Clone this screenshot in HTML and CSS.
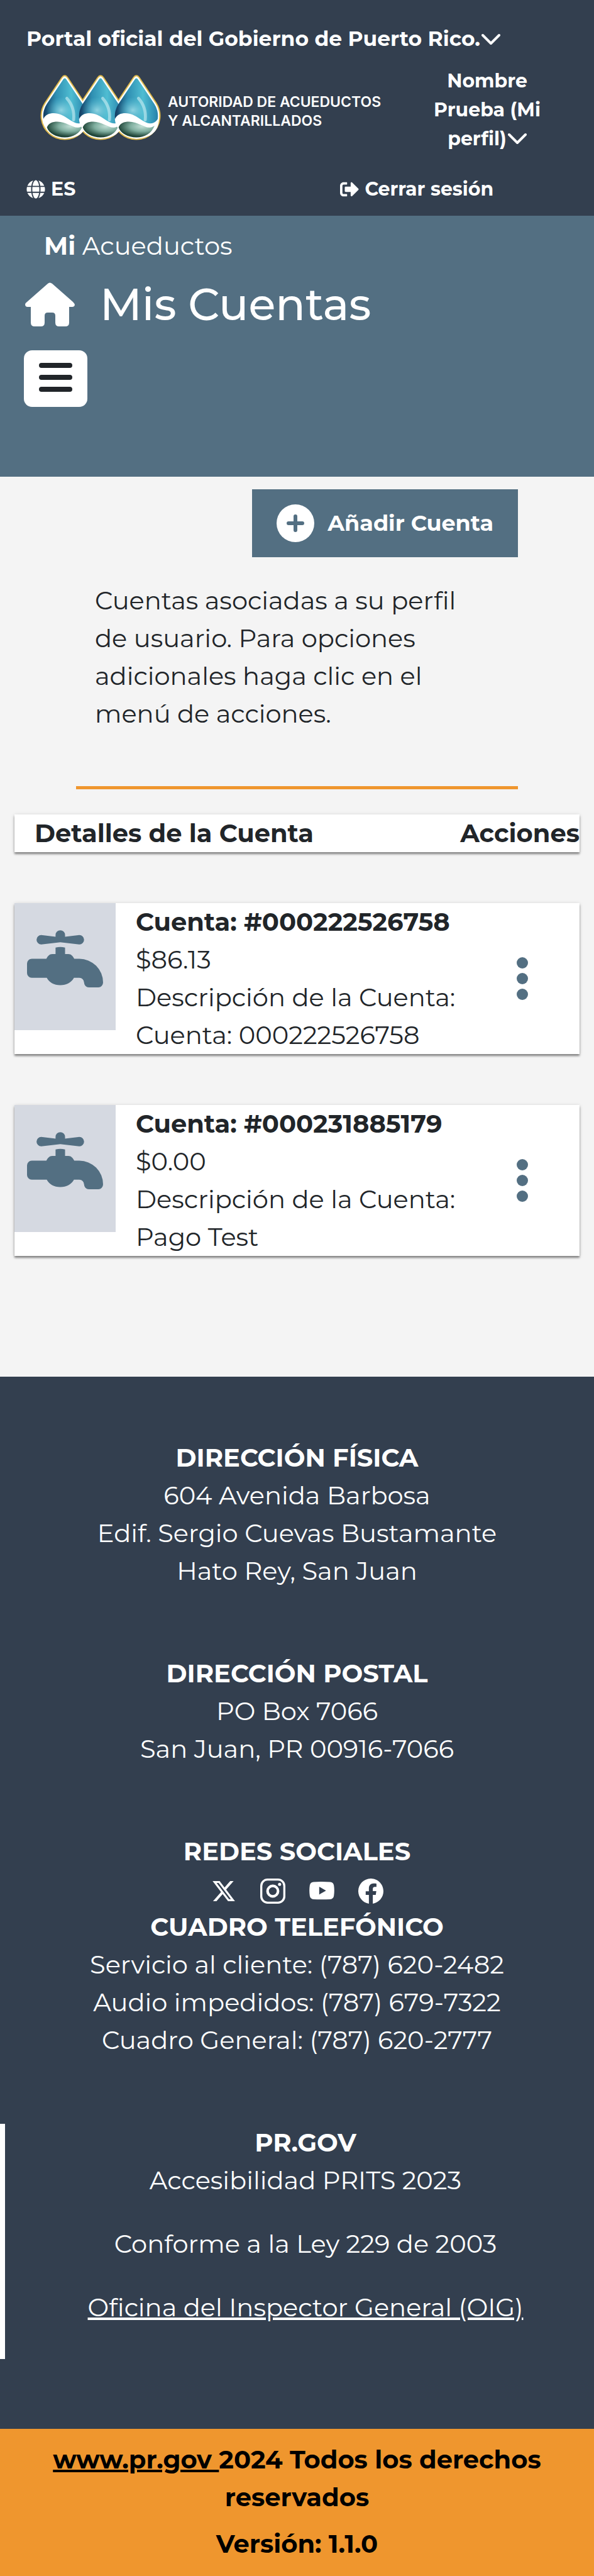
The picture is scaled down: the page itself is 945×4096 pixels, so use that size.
FILE: index.html
```html
<!DOCTYPE html>
<html lang="es">
<head>
<meta charset="utf-8">
<meta name="viewport" content="width=device-width, initial-scale=1">
<title>Mis Cuentas - Mi Acueductos</title>
<link rel="stylesheet" href="styles.css">
</head>
<body>
<svg class="defs" aria-hidden="true">
  <defs>
    <symbol id="chevron" viewBox="0 0 30 20"><path d="M2 3l13 13L28 3" fill="none" stroke="currentColor" stroke-width="4" stroke-linecap="round" stroke-linejoin="round"/></symbol>
    <symbol id="faucet" viewBox="0 64 512 384">
      <path d="M96 96L192 108V96a32 32 0 0 1 64 0v12L352 96a32 32 0 0 1 0 64L224 145 96 160a32 32 0 0 1 0-64Z"/>
      <path d="M192 181q32-8 64 0v43h22c20 0 30 14 40 32h34a160 160 0 0 1 160 160a32 32 0 0 1-32 32h-64a32 32 0 0 1-32-32a32 32 0 0 0-32-32h-36c-18 32-50 50-92 50s-74-18-91-50H32a32 32 0 0 1-32-32v-64a32 32 0 0 1 32-32h98c10-18 20-32 40-32h22Z"/>
    </symbol>
    <symbol id="dots" viewBox="0 0 20 70"><circle cx="10" cy="10" r="9"/><circle cx="10" cy="35" r="9"/><circle cx="10" cy="60" r="9"/></symbol>
    <linearGradient id="blue" x1="0" y1="0" x2="1" y2="0">
      <stop offset="0" stop-color="#123a60"/><stop offset=".3" stop-color="#2f8fb2"/><stop offset=".65" stop-color="#4fbdd2"/><stop offset="1" stop-color="#2782ab"/>
    </linearGradient>
    <radialGradient id="glow"><stop offset="0" stop-color="#a5e0ea" stop-opacity=".8"/><stop offset="1" stop-color="#5cc3d6" stop-opacity="0"/></radialGradient>
    <radialGradient id="green" cx=".65" cy=".3" r=".65">
      <stop offset="0" stop-color="#c2dfd6"/><stop offset=".5" stop-color="#7fae9f"/><stop offset="1" stop-color="#1f4538"/>
    </radialGradient>
    <path id="shell" d="M-13 82Q0 64 13 82L109 226A130 130 0 1 1-109 226Z"/>
    <path id="inner" d="M-7 88Q0 80 7 88L101 229A122 122 0 1 1-101 229Z"/>
    <clipPath id="innerClip"><use href="#inner"/></clipPath>
    <g id="drop">
      <use href="#inner" fill="url(#blue)"/>
      <g clip-path="url(#innerClip)">
        <ellipse cx="-20" cy="265" rx="85" ry="75" fill="url(#glow)"/>
        <path d="M12 198Q58 250 50 320" fill="none" stroke="#c3eaf0" stroke-width="17" stroke-linecap="round" opacity=".65"/>
      </g>
      <path d="M-122 316C-110 290-88 282-62 282C0 282 34 338 78 340C105 341 118 320 127 308C132 400 60 425 0 426C-70 422-118 370-122 316Z" fill="#fff"/>
      <path d="M-101 362C-92 338-70 330-42 330C10 330 45 366 76 363C88 362 94 358 103 352C86 396 48 419 0 419C-48 419-90 396-101 362Z" fill="url(#green)"/>
    </g>
  </defs>
</svg>

<header class="topbar">
  <button class="plain portal" type="button">Portal oficial del Gobierno de Puerto Rico.<svg class="chevron"><use href="#chevron"/></svg></button>
  <div class="brand-row">
    <a class="brand" href="#">
      <svg class="drops" viewBox="48 65 684 370" aria-hidden="true">
        <g stroke="#dfb94a" stroke-width="14" fill="#fff"><use href="#shell" x="187"/><use href="#shell" x="390"/><use href="#shell" x="593"/></g>
        <g fill="#fff"><use href="#shell" x="187"/><use href="#shell" x="390"/><use href="#shell" x="593"/></g>
        <use href="#drop" x="187"/><use href="#drop" x="390"/><use href="#drop" x="593"/>
      </svg>
      <span>AUTORIDAD DE ACUEDUCTOS<br>Y ALCANTARILLADOS</span>
    </a>
    <button class="plain user" type="button">Nombre<br>Prueba (Mi<br>perfil)<svg class="chevron"><use href="#chevron"/></svg></button>
  </div>
  <div class="tools">
    <a class="tool" href="#"><svg class="tool-icon" viewBox="0 0 496 512"><path d="M336.500 160C322 70.700 287.800 8 248 8s-74 62.700-88.500 152h177zM152 256c0 22.200 1.200 43.500 3.300 64h185.300c2.100-20.500 3.300-41.800 3.300-64s-1.200-43.500-3.300-64H155.300c-2.100 20.500-3.300 41.800-3.300 64zm324.700-96c-28.600-67.900-86.500-120.400-158-141.600 24.400 33.800 41.200 84.700 50 141.600h108zM177.200 18.400C105.800 39.600 47.800 92.100 19.300 160h108c8.700-56.900 25.500-107.800 49.900-141.600zM487.400 192H372.700c2.100 21 3.300 42.500 3.300 64s-1.200 43-3.300 64h114.600c5.500-20.500 8.600-41.800 8.600-64s-3.100-43.500-8.500-64zM120 256c0-21.500 1.200-43 3.300-64H8.600C3.200 212.500 0 233.800 0 256s3.200 43.500 8.600 64h114.600c-2-21-3.200-42.500-3.200-64zm39.500 96c14.500 89.300 48.700 152 88.500 152s74-62.700 88.500-152h-177zm159.300 141.600c71.400-21.200 129.400-73.700 158-141.600h-108c-8.800 56.900-25.600 107.800-50 141.600zM19.300 352c28.600 67.900 86.500 120.400 158 141.600-24.400-33.800-41.200-84.700-50-141.600h-108z"/></svg>ES</a>
    <a class="tool" href="#"><svg class="tool-icon" viewBox="0 0 512 512"><path d="M497 273L329 441c-15 15-41 4.500-41-17v-96H152c-13.300 0-24-10.700-24-24v-96c0-13.300 10.700-24 24-24h136V88c0-21.400 25.900-32 41-17l168 168c9.300 9.400 9.300 24.600 0 34zM192 436v-40c0-6.600-5.400-12-12-12H96c-17.700 0-32-14.300-32-32V160c0-17.700 14.300-32 32-32h84c6.600 0 12-5.400 12-12V76c0-6.600-5.400-12-12-12H96c-53 0-96 43-96 96v192c0 53 43 96 96 96h84c6.600 0 12-5.400 12-12z"/></svg>Cerrar sesión</a>
  </div>
</header>

<section class="hero">
  <p class="app-name"><b>Mi</b> Acueductos</p>
  <div class="title-row">
    <a href="#" aria-label="Inicio"><svg class="home" viewBox="0 0 79 70"><path d="M36 2Q39 -1 43 2L76 31Q79 34 79 36Q78 39 75 39H70V64Q70 70 64 70H54Q48 70 48 64V53Q48 48 43 48H36Q31 48 31 53V64Q31 70 25 70H15Q9 70 9 64V39H4Q0 39 0 35Q0 33 3 31Z"/></svg></a>
    <h1>Mis Cuentas</h1>
  </div>
  <button class="menu" type="button" aria-label="Menú"><span></span><span></span><span></span></button>
</section>

<main>
  <div class="intro">
    <button class="add" type="button"><svg class="plus" viewBox="0 0 60 60"><circle cx="30" cy="30" r="30" fill="#fff"/><path d="M30 19v22M19 30h22" stroke="#536f82" stroke-width="6" stroke-linecap="round"/></svg>Añadir Cuenta</button>
    <p>Cuentas asociadas a su perfil<br>de usuario. Para opciones<br>adicionales haga clic en el<br>menú de acciones.</p>
  </div>
  <div class="accounts">
    <div class="panel heading"><span>Detalles de la Cuenta</span><span>Acciones</span></div>
    <article class="panel account">
      <div class="thumb"><svg><use href="#faucet"/></svg></div>
      <div class="details"><h2>Cuenta: #000222526758</h2><p>$86.13</p><p>Descripción de la Cuenta:</p><p>Cuenta: 000222526758</p></div>
      <button class="plain actions" type="button" aria-label="Acciones"><svg><use href="#dots"/></svg></button>
    </article>
    <article class="panel account">
      <div class="thumb"><svg><use href="#faucet"/></svg></div>
      <div class="details"><h2>Cuenta: #000231885179</h2><p>$0.00</p><p>Descripción de la Cuenta:</p><p>Pago Test</p></div>
      <button class="plain actions" type="button" aria-label="Acciones"><svg><use href="#dots"/></svg></button>
    </article>
  </div>
</main>

<footer>
  <div class="info">
    <section><h2>DIRECCIÓN FÍSICA</h2><p>604 Avenida Barbosa</p><p>Edif. Sergio Cuevas Bustamante</p><p>Hato Rey, San Juan</p></section>
    <section><h2>DIRECCIÓN POSTAL</h2><p>PO Box 7066</p><p>San Juan, PR 00916-7066</p></section>
    <section>
      <h2>REDES SOCIALES</h2>
      <div class="social">
        <a href="#" aria-label="X"><svg viewBox="-1 -1 18 18"><path d="M12.600.750h2.454l-5.360 6.142L16 15.250h-4.937l-3.867-5.070-4.425 5.070H.316l5.733-6.570L0 .750h5.063l3.495 4.633L12.601.750Zm-.860 13.028h1.360L4.323 2.145H2.865z"/></svg></a>
        <a href="#" aria-label="Instagram"><svg viewBox="0 0 48 48"><g fill="none" stroke="currentColor"><rect x="2" y="2" width="44" height="44" rx="12" stroke-width="4"/><circle cx="24" cy="24" r="10" stroke-width="5"/></g><circle cx="37" cy="11" r="3"/></svg></a>
        <a href="#" aria-label="YouTube"><svg viewBox="0 0 48 48"><path fill-rule="evenodd" d="M8 6.500Q24 5.500 40 6.500Q46 7 47 13Q48.500 23 47 33Q46 39 40 39.500Q24 40.500 8 39.500Q2 39 1 33Q-.500 23 1 13Q2 7 8 6.500ZM19 15.500V30.500L32 23Z"/></svg></a>
        <a href="#" aria-label="Facebook"><svg viewBox="0 0 16 16"><path d="M16 8.049c0-4.446-3.582-8.050-8-8.050C3.580 0-.002 3.603-.002 8.050c0 4.017 2.926 7.347 6.750 7.951v-5.625h-2.030V8.050H6.750V6.275c0-2.017 1.195-3.131 3.022-3.131.876 0 1.791.157 1.791.157v1.980h-1.009c-.993 0-1.303.621-1.303 1.258v1.510h2.218l-.354 2.326H9.250V16c3.824-.604 6.750-3.934 6.750-7.951"/></svg></a>
      </div>
      <h2>CUADRO TELEFÓNICO</h2><p>Servicio al cliente: (787) 620-2482</p><p>Audio impedidos: (787) 679-7322</p><p>Cuadro General: (787) 620-2777</p>
    </section>
    <section class="gov"><h2>PR.GOV</h2><p>Accesibilidad PRITS 2023</p><p>Conforme a la Ley 229 de 2003</p><p><a href="#">Oficina del Inspector General (OIG)</a></p></section>
  </div>
  <div class="legal">
    <p><a href="#">www.pr.gov </a>2024 Todos los derechos<br>reservados</p>
    <p>Versión: 1.1.0</p>
  </div>
</footer>
</body>
</html>
```

FILE: styles.css
```css
* { box-sizing: border-box; }
body { margin: 0; background: #f4f4f4; color: #212529; font-family: Montserrat, Inter, sans-serif; font-size: 40px; line-height: 60px; }
h1, h2, p { margin: 0; }
h2 { font-size: 40px; font-weight: 700; }
a { color: inherit; }
svg { fill: currentColor; display: block; }
.defs { position: absolute; width: 0; height: 0; }
.plain { padding: 0; border: 0; background: none; color: inherit; font: inherit; }

.topbar { background: #333f4f; color: #fff; padding: 37px 42px 18px; font-size: 30px; font-weight: 700; line-height: 48px; }
.topbar a { text-decoration: none; }
.chevron { display: inline-block; width: 30px; height: 20px; margin-left: 2px; }
.portal { display: block; text-align: left; font-size: 33px; }
.brand-row { display: flex; justify-content: space-between; align-items: flex-start; padding: 21px 33px 33px 22px; }
.brand { display: flex; align-items: flex-start; gap: 11px; padding-top: 13px; font-family: Inter, sans-serif; font-size: 23px; font-weight: 600; line-height: 30px; }
.drops { width: 192px; height: 104px; }
.brand span { padding-top: 28px; }
.user { width: 190px; line-height: 46px; text-align: center; }
.tools { display: grid; grid-template-columns: 58% 42%; }
.tool { display: flex; align-items: center; gap: 9px; }
.tool-icon { width: 30px; height: 30px; }

.hero { background: #536f82; color: #fff; padding: 18px 38px 111px; }
.app-name { padding-left: 32px; }
.title-row { display: flex; align-items: center; gap: 40px; padding: 13px 2px 23px; }
.home { width: 79px; height: 70px; }
h1 { font-size: 70px; font-weight: 500; line-height: 100px; }
.menu { width: 101px; height: 90px; border: 0; border-radius: 13px; background: #fff; display: flex; flex-direction: column; align-items: center; justify-content: center; gap: 11px; padding: 0 0 4px; }
.menu span { width: 53px; height: 8px; border-radius: 4px; background: #212529; }

.intro { margin: 20px 121px 40px; padding-bottom: 85px; border-bottom: 5px solid #ef962e; display: flex; flex-direction: column; }
.add { align-self: flex-end; display: flex; align-items: center; gap: 21px; height: 108px; padding: 0 39px; border: 0; background: #536f82; color: #fff; font: inherit; font-size: 35px; font-weight: 700; }
.plus { width: 60px; height: 60px; }
.intro p { padding: 39px 30px 0; }

.accounts { padding: 0 23px 192px; display: flex; flex-direction: column; gap: 81px; }
.panel { background: #fff; box-shadow: 0 3px 3px rgba(0, 0, 0, .4), 0 1px 6px rgba(0, 0, 0, .15); }
.heading { display: flex; justify-content: space-between; padding-left: 32px; font-weight: 700; }
.account { display: flex; align-items: stretch; }
.thumb { width: 161px; height: 202px; padding: 43px 20px; background: #d5d9e1; color: #536f82; }
.thumb svg { width: 121px; height: 91px; }
.details { flex: 1; padding-left: 32px; }
.actions { width: 182px; display: flex; align-items: center; justify-content: center; color: #536f82; }
.actions svg { width: 20px; height: 70px; }

footer { text-align: center; }
.info { background: #333f4f; color: #fff; padding: 99px 0 111px; display: flex; flex-direction: column; gap: 103px; }
.social { display: flex; justify-content: center; align-items: center; gap: 38px; height: 60px; padding-top: 6px; }
.social svg { width: 40px; height: 40px; }
.gov { border-left: 8px solid #fff; padding: 0 0 11px 19px; }
.gov p + p { margin-top: 41px; }
.gov p:last-child { margin-bottom: 41px; }
.legal { background: #ef962e; color: #000; font-weight: 700; padding: 19px 40px 21px; display: flex; flex-direction: column; gap: 14px; }
```
